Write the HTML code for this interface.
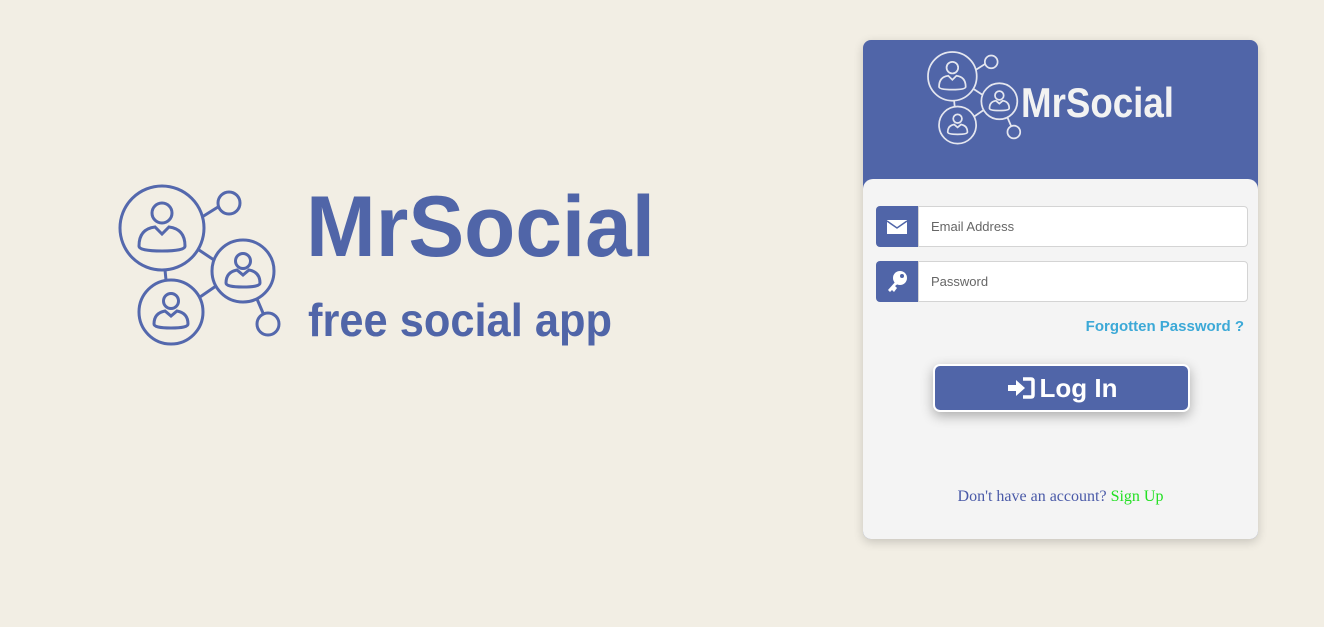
<!DOCTYPE html>
<html><head><meta charset="utf-8"><style>
html,body{margin:0;padding:0;width:1324px;height:627px;overflow:hidden;background:#f2eee4;font-family:"Liberation Sans",sans-serif;}
.abs{position:absolute;}
.card{left:863px;top:40px;width:395px;height:499px;border-radius:8px;background:#5065a8;box-shadow:0 3px 10px rgba(0,0,0,.18);overflow:hidden;}
.body{left:0;top:139px;width:395px;height:360px;background:#f4f4f4;border-radius:10px 10px 0 0;}
.inp{left:13px;width:371px;height:40px;}
.ico{position:absolute;left:0;top:0;width:42px;height:41px;background:#5065a8;border-radius:4px 0 0 4px;}
.fld{position:absolute;left:42px;top:0;background:#fff;border:1px solid #d4d4d4;border-radius:0 4px 4px 0;font-size:13px;color:#666;line-height:39px;padding-left:12px;box-sizing:border-box;width:330px;height:41px;}
.btn{left:70px;top:185px;width:253px;height:44px;background:#5065a8;border:2px solid #fff;border-radius:7px;box-shadow:0 4px 12px rgba(0,0,0,.3);color:#fff;font-weight:bold;font-size:26px;text-align:center;line-height:44px;}
</style></head><body>
<svg class="abs" style="left:0;top:0" width="1324" height="627">
<defs>
<g id="logo" fill="none" stroke-width="3">
<circle cx="52" cy="48" r="42"/><circle cx="119" cy="23" r="11"/><circle cx="133" cy="91" r="31"/><circle cx="61" cy="132" r="32"/><circle cx="158" cy="144" r="11"/>
<path d="M92 37L108 27M89 70L104 80M55 90L56 100M106 106L90 117M147 119L153 133"/>
<circle cx="52" cy="33" r="10"/><path d="M29 66Q29 49 45 47L52 54L59 47Q75 49 75 66Q75 71 52 71Q29 71 29 66Z"/>
<circle cx="133" cy="81" r="7.5"/><path d="M116 103Q116 92 127 90L133 95L139 90Q150 92 150 103Q150 107 133 107Q116 107 116 103Z"/>
<circle cx="61" cy="121" r="7.5"/><path d="M44 144Q44 133 55 131L61 136L67 131Q78 133 78 144Q78 148 61 148Q44 148 44 144Z"/>
</g>
</defs>
<use href="#logo" transform="translate(110,180)" stroke="#5468ad"/>
<text x="306" y="256" font-size="86" font-weight="bold" fill="#5065a8" textLength="349" lengthAdjust="spacingAndGlyphs">MrSocial</text>
<text x="308" y="336" font-size="46" font-weight="bold" fill="#5065a8" textLength="304" lengthAdjust="spacingAndGlyphs">free social app</text>
</svg>
<div class="abs card">
<svg class="abs" style="left:0;top:0" width="395" height="140">
<use href="#logo" transform="translate(59.2,8.5) scale(0.58)" stroke="#e4e6ef" stroke-width="3.4"/>
<text x="158" y="77" font-size="42" font-weight="bold" fill="#f2f2f2" textLength="153" lengthAdjust="spacingAndGlyphs">MrSocial</text>
</svg>
<div class="abs body">
<div class="abs inp" style="top:27px"><div class="ico"><svg width="42" height="41"><rect x="11" y="14" width="20" height="14" fill="#fff"/><path d="M11 15L21 22L31 15" stroke="#5065a8" stroke-width="1.5" fill="none"/></svg></div><div class="fld">Email Address</div></div>
<div class="abs inp" style="top:82px"><div class="ico"><svg width="42" height="41"><circle cx="24" cy="17" r="7" fill="#fff"/><circle cx="26" cy="15" r="2" fill="#5065a8"/><path d="M20 20L12 29L14 31L16 29L18 31L21 27L19 25L23 22Z" fill="#fff"/></svg></div><div class="fld">Password</div></div>
<div class="abs" style="right:14px;top:139px;font-size:15px;font-weight:bold;color:#3ca9d7;">Forgotten Password ?</div>
<div class="abs btn"><svg width="30" height="24" style="vertical-align:-3px;margin-right:4px"><path d="M2 9H10V4L19 12L10 20V15H2Z" fill="#fff"/><path d="M17 3H25Q27 3 27 5V19Q27 21 25 21H17" stroke="#fff" stroke-width="3.5" fill="none"/></svg>Log In</div>
<div class="abs" style="left:0;width:395px;top:309px;text-align:center;font-family:'Liberation Serif',serif;font-size:16px;color:#4a5aa8;">Don't have an account? <span style="color:#22e022">Sign Up</span></div>
</div>
</div>
</body></html>
